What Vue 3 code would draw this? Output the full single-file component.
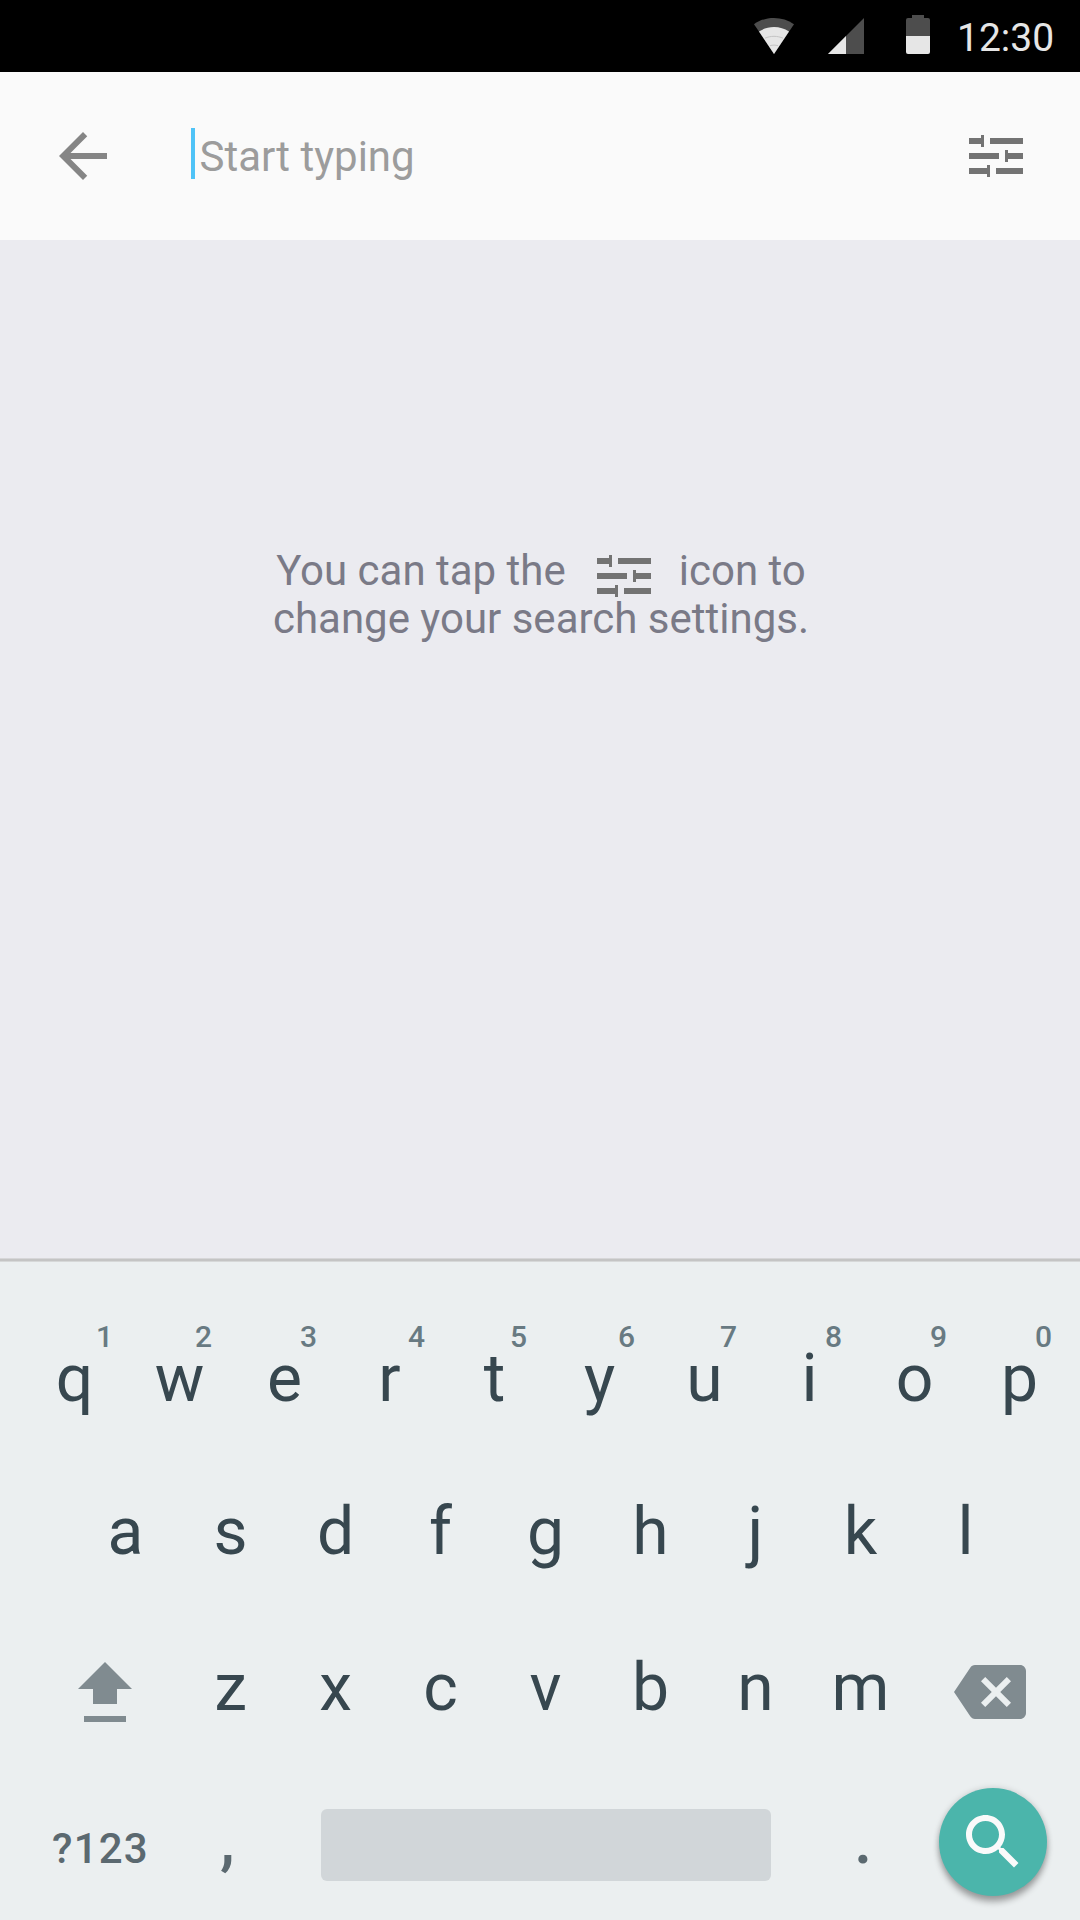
<script setup>
const topRow = [
  { key: 'q', hint: '1', left: 74 },
  { key: 'w', hint: '2', left: 68 },
  { key: 'e', hint: '3', left: 68 },
  { key: 'r', hint: '4', left: 71 },
  { key: 't', hint: '5', left: 68 },
  { key: 'y', hint: '6', left: 71 },
  { key: 'u', hint: '7', left: 68 },
  { key: 'i', hint: '8', left: 68 },
  { key: 'o', hint: '9', left: 68 },
  { key: 'p', hint: '0', left: 68 },
]
const middleRow = [...'asdfghjkl']
const bottomRow = [...'zxcvbnm']
const tunePath =
  'M0 3h12V0h3v12h-3V9H0zM21 3h33v6H21zM0 18h30v6H0zM36 15h3v3h15v6H39v3h-3zM0 33h18v-3h3v12h-3v-3H0zM27 33h27v6H27z'
</script>

<template>
  <div class="screen">
    <div class="status">
      <svg class="wifi" width="42" height="36" viewBox="0 0 42 36">
        <path d="M21 36 1 6.2C7 2 13.6 0 21 0s14 2 20 6.2z" fill="#4d4d4d" />
        <path d="M21 36 6 13.6C10.5 10.5 15.5 9 21 9s10.5 1.5 15 4.600z" fill="#e6e6e6" />
        <path d="M12 20.200c5.500-2.500 12.500-2.500 18 0M17 27.700c2.600-.8 5.400-.8 8 0" fill="none" stroke="#c4c4c4" stroke-width="1" />
      </svg>
      <svg class="signal" width="36" height="36" viewBox="0 0 36 36">
        <path d="M36 0v36H0z" fill="#4d4d4d" />
        <path d="M18 18v18H0z" fill="#e6e6e6" />
      </svg>
      <svg class="battery" width="24" height="39" viewBox="0 0 24 39">
        <path d="M6 0h12v3h4q2 0 2 2v16H0V5q0-2 2-2h4z" fill="#4d4d4d" />
        <path d="M0 21h24v16q0 2-2 2H2q-2 0-2-2z" fill="#e6e6e6" />
      </svg>
      <span class="clock">12:30</span>
    </div>

    <header class="bar">
      <svg class="back" width="72" height="72" viewBox="0 0 24 24">
        <path d="M20 11H7.83l5.59-5.59L12 4l-8 8 8 8 1.41-1.41L7.83 13H20v-2z" fill="#858585" />
      </svg>
      <span class="cursor"></span>
      <span class="placeholder">Start typing</span>
      <svg class="tune" width="54" height="42" viewBox="0 0 54 42"><path :d="tunePath" fill="#737373" /></svg>
    </header>

    <main class="content">
      <p class="line">
        <span>You can tap the</span>
        <svg class="inline-tune" width="54" height="42" viewBox="0 0 54 42"><path :d="tunePath" fill="#737373" /></svg>
        <span>icon to</span>
      </p>
      <p class="line">change your search settings.</p>
    </main>

    <section class="keyboard">
      <div class="row row-top">
        <div v-for="k in topRow" :key="k.key" class="key">
          {{ k.key }}<span class="hint" :style="{ left: k.left + 'px' }">{{ k.hint }}</span>
        </div>
      </div>
      <div class="row row-middle">
        <div v-for="k in middleRow" :key="k" class="key">{{ k }}</div>
      </div>
      <div class="row row-bottom">
        <svg class="shift" width="54" height="60" viewBox="0 0 54 60">
          <path d="M27 0l27 27H39v15H15V27H0zM6 54h42v6H6z" fill="#808b90" />
        </svg>
        <div v-for="k in bottomRow" :key="k" class="key">{{ k }}</div>
        <svg class="backspace" width="72" height="72" viewBox="0 0 24 24">
          <path
            d="M22 3H7c-.69 0-1.23.35-1.59.88L0 12l5.41 8.11c.36.53.9.89 1.59.89h15c1.1 0 2-.9 2-2V5c0-1.1-.9-2-2-2zm-3 12.59L17.59 17 14 13.41 10.41 17 9 15.59 12.59 12 9 8.41 10.41 7 14 10.59 17.59 7 19 8.41 15.41 12 19 15.59z"
            fill="#808b90"
          />
        </svg>
      </div>
      <div class="row row-space">
        <div class="symbols">?123</div>
        <div class="punct comma">,</div>
        <div class="space"></div>
        <div class="punct period">.</div>
        <div class="search">
          <svg width="72" height="72" viewBox="0 0 24 24">
            <path
              d="M15.5 14h-.79l-.28-.27C15.41 12.59 16 11.11 16 9.5 16 5.91 13.09 3 9.5 3S3 5.91 3 9.5 5.91 16 9.5 16c1.61 0 3.09-.59 4.23-1.57l.27.28v.79l5 4.99L20.49 19l-4.99-5zm-6 0C7.01 14 5 11.99 5 9.5S7.01 5 9.5 5 14 7.01 14 9.5 11.99 14 9.5 14z"
              fill="#fafafa"
            />
          </svg>
        </div>
      </div>
    </section>
  </div>
</template>

<style>
body {
  margin: 0;
}
</style>

<style scoped>
.screen {
  width: 1080px;
  height: 1920px;
  overflow: hidden;
  display: flex;
  flex-direction: column;
  font-family: Roboto, 'Liberation Sans', sans-serif;
}
svg {
  display: block;
  flex: none;
}
.status {
  height: 72px;
  flex: none;
  background: #000;
  display: flex;
  align-items: flex-start;
}
.wifi {
  margin: 18px 0 0 753px;
}
.signal {
  margin: 18px 0 0 33px;
}
.battery {
  margin: 15px 0 0 42px;
}
.clock {
  margin-left: 27px;
  font-size: 39px;
  line-height: 76px;
  color: #e6e6e6;
}
.bar {
  height: 168px;
  flex: none;
  background: #fafafa;
  display: flex;
  align-items: flex-start;
}
.back {
  margin: 48px 0 0 47px;
}
.cursor {
  width: 4px;
  height: 51px;
  margin: 56px 0 0 72px;
  background: #4fc3f7;
}
.placeholder {
  margin: 60px 0 0 4.5px;
  width: 300px;
  font-size: 42px;
  line-height: 49px;
  color: #9c9c9c;
  white-space: nowrap;
}
.tune {
  margin: 63px 57px 0 auto;
}
.content {
  height: 1018px;
  flex: none;
  box-sizing: border-box;
  padding: 306px 0 0 2px;
  background: #ebebf0;
  color: #7a7a87;
}
.line {
  margin: 0;
  height: 48px;
  line-height: 49px;
  font-size: 42px;
  display: flex;
  justify-content: center;
  white-space: nowrap;
}
.inline-tune {
  margin: 9px 28px 0 31px;
}
.keyboard {
  flex: 1;
  background: #ebeff0;
  border-top: 1px solid #d6d6d8;
  box-shadow: inset 0 2px #c4c4c4, inset 0 3px #d6d8d8;
  color: #37474f;
}
.row {
  display: flex;
  height: 101px;
}
.key {
  position: relative;
  width: 105px;
  flex: none;
  text-align: center;
  font-size: 66px;
  line-height: 101px;
}
.hint {
  position: absolute;
  top: -9px;
  font-size: 30px;
  line-height: 35px;
  font-weight: 500;
  color: #687a82;
}
.row-top {
  padding: 69px 0 0 22px;
}
.row-middle {
  padding: 52px 0 0 73px;
}
.row-bottom {
  padding: 55px 0 0 78px;
}
.shift {
  margin: 25px 46px 0 0;
}
.backspace {
  margin: 19px 0 0 41px;
}
.row-space {
  margin-top: 50px;
  height: 132px;
  color: #5b6970;
  font-weight: 500;
}
.symbols {
  box-sizing: border-box;
  width: 220px;
  padding-left: 52px;
  font-size: 42px;
  letter-spacing: 1.2px;
  line-height: 49px;
  margin-top: 36px;
}
.punct {
  font-size: 66px;
  line-height: 77px;
  margin-top: 14px;
}
.comma {
  width: 101px;
}
.space {
  width: 450px;
  height: 72px;
  margin-top: 21px;
  border-radius: 6px;
  background: #d1d6d9;
}
.period {
  width: 85px;
  padding-left: 83px;
}
.search {
  width: 108px;
  height: 108px;
  border-radius: 50%;
  background: #4bb5ab;
  box-shadow: 0 6px 6px rgba(0, 0, 0, 0.3), 0 0 6px rgba(0, 0, 0, 0.15);
}
.search svg {
  margin: 18px;
}
</style>
